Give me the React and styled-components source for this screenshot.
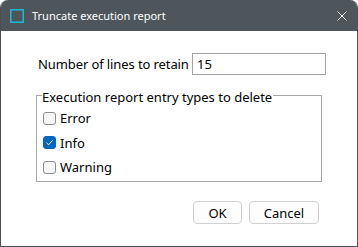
import React, { useState } from "react";
import styled, { createGlobalStyle } from "styled-components";

const Global = createGlobalStyle`
  html, body { margin: 0; padding: 0; background: #ffffff; }
  body { font-family: "Noto Sans", "Segoe UI", sans-serif; font-size: 13px; color: #000; }
  * { box-sizing: border-box; }
`;

const Window = styled.div`
  width: 358px;
  height: 247px;
  border: 1px solid #4a5156;
  border-top: none;
  border-radius: 8px 8px 0 0;
  overflow: hidden;
  display: flex;
  flex-direction: column;
  background: #ffffff;
`;

const TitleBar = styled.div`
  height: 31px;
  background: #4e565b;
  display: flex;
  align-items: center;
  padding: 0 0 0 9px;
  color: #ffffff;
`;

const AppIcon = styled.svg`
  display: block;
  margin-right: 8px;
  flex: none;
`;

const Title = styled.span`
  flex: 1;
  font-size: 11px;
`;

const CloseBtn = styled.span`
  width: 30px;
  display: flex;
  justify-content: center;
  align-items: center;
`;

const Content = styled.div`
  flex: 1;
  display: flex;
  flex-direction: column;
  padding: 22px 0 0 35px;
`;

const FieldRow = styled.div`
  display: flex;
  align-items: center;
  padding-left: 2px;
`;

const Label = styled.label`
  width: 154px;
  flex: none;
  letter-spacing: -0.1px;
`;

const TextInput = styled.input`
  width: 134px;
  height: 22px;
  border: 1px solid #a3a3a3;
  padding: 0 4px;
  font: inherit;
  color: #000;
  outline: none;
  background: #fff;
`;

const Group = styled.fieldset`
  margin: 10px 0 0 0;
  width: 286px;
  border: 1px solid #a8a8a8;
  padding: 0 0 0 6px;
  min-width: 0;
  height: 97px;
`;

const Legend = styled.legend`
  padding: 4px 1px 0 0;
  margin-left: -1px;
  line-height: 17px;
`;

const CheckRow = styled.label`
  display: flex;
  align-items: center;
  height: 24.5px;
  gap: 4px;
`;

const Box = styled.span`
  width: 13px;
  height: 13px;
  border-radius: 3px;
  border: 1px solid ${(p) => (p.$checked ? "#0067c0" : "#8c8c8c")};
  background: ${(p) => (p.$checked ? "#0067c0" : "#f6f6f6")};
  display: flex;
  align-items: center;
  justify-content: center;
  flex: none;
`;

const Buttons = styled.div`
  display: flex;
  justify-content: flex-end;
  gap: 7px;
  padding-right: 38px;
  margin-top: auto;
  margin-bottom: 22px;
`;

const Button = styled.button`
  width: ${(p) => p.$w}px;
  height: 23px;
  border: 1px solid #d0d0d0;
  border-radius: 4px;
  background: #fdfdfd;
  font: inherit;
  color: #000;
  padding: 0;
`;

function Check({ checked, label }) {
  return (
    <CheckRow>
      <Box $checked={checked}>
        {checked && (
          <svg width="9" height="9" viewBox="0 0 9 9">
            <path d="M1.5 4.8 L3.6 6.8 L7.6 2.4" fill="none" stroke="#fff" strokeWidth="1" />
          </svg>
        )}
      </Box>
      <span>{label}</span>
    </CheckRow>
  );
}

export default function App() {
  const [val, setVal] = useState("15");
  return (
    <>
      <Global />
      <Window>
        <TitleBar>
          <AppIcon width="14" height="14" viewBox="0 0 14 14">
            <rect x="0.75" y="0.75" width="12.5" height="12.5" fill="none" stroke="#16bcd4" strokeWidth="1.5" />
          </AppIcon>
          <Title>Truncate execution report</Title>
          <CloseBtn>
            <svg width="10" height="10" viewBox="0 0 10 10">
              <path d="M0.5 0.5 L9.5 9.5 M9.5 0.5 L0.5 9.5" stroke="#fff" strokeWidth="1" />
            </svg>
          </CloseBtn>
        </TitleBar>
        <Content>
          <FieldRow>
            <Label>Number of lines to retain</Label>
            <TextInput value={val} onChange={(e) => setVal(e.target.value)} />
          </FieldRow>
          <Group>
            <Legend>Execution report entry types to delete</Legend>
            <Check label="Error" />
            <Check label="Info" checked />
            <Check label="Warning" />
          </Group>
        </Content>
        <Buttons>
          <Button $w={49}>OK</Button>
          <Button $w={70}>Cancel</Button>
        </Buttons>
      </Window>
    </>
  );
}
